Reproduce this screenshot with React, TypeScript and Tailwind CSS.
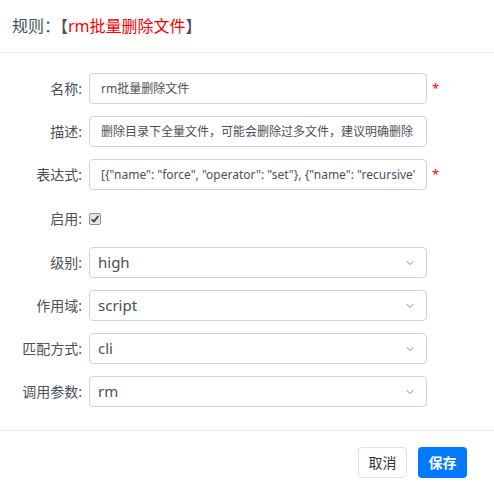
import React from 'react';
import { ChevronDown } from 'lucide-react';

const FONT = { fontFamily: '"Noto Sans", "Noto Sans CJK SC", sans-serif' };

function Label({ text }: { text: string }) {
  return (
    <div className="w-[83px] shrink-0 text-right text-[14px] text-[#495057] pr-[1px]">
      {text}
    </div>
  );
}

function TextRow({ label, value, required }: { label: string; value: string; required?: boolean }) {
  return (
    <div className="flex items-center h-[31px] mb-3">
      <Label text={label} />
      <div className="ml-[6px] w-[338px] h-[31px] border border-[#ced4da] rounded-[4px] px-[11px] flex items-center">
        <div className="flex-1 overflow-hidden whitespace-nowrap text-[12px] text-[#495057]">{value}</div>
      </div>
      {required && <span className="ml-[5px] text-[13px] text-[#ff0000] leading-none">*</span>}
    </div>
  );
}

function SelectRow({ label, value }: { label: string; value: string }) {
  return (
    <div className="flex items-center h-[31px] mb-3">
      <Label text={label} />
      <div className="ml-[6px] w-[338px] h-[31px] border border-[#ced4da] rounded-[4px] pl-[8px] pr-[10px] flex items-center justify-between">
        <span className="text-[15px] text-[#495057]">{value}</span>
        <ChevronDown className="w-[12px] h-[12px] text-[#7d858c]" strokeWidth={2} />
      </div>
    </div>
  );
}

export default function App() {
  return (
    <div className="w-[494px] h-[494px] bg-white flex flex-col" style={FONT}>
      {/* header */}
      <div className="h-[53px] border-b border-[#e9ecef] px-3 flex items-center">
        <h5 className="text-[16px] text-[#495057]">
          规则：【<span className="text-[#ff0000]">rm批量删除文件</span>】
        </h5>
      </div>

      {/* body */}
      <div className="pt-5 flex-1">
        <TextRow label="名称:" value="rm批量删除文件" required />
        <TextRow label="描述:" value="删除目录下全量文件，可能会删除过多文件，建议明确删除" />
        <TextRow
          label="表达式:"
          value={'[{"name": "force", "operator": "set"}, {"name": "recursive", "operator": "set"}]'}
          required
        />
        <div className="flex items-center h-[33px] mb-3">
          <Label text="启用:" />
          <div className="ml-[6px] w-[12px] h-[12px] border border-[#8f8f8f] bg-[#e6e6e6] rounded-[2px] flex items-center justify-center">
            <svg viewBox="0 0 12 12" className="w-[10px] h-[10px]">
              <path d="M2 6.5 L4.8 9 L10 2.5" fill="none" stroke="#333" strokeWidth="2" />
            </svg>
          </div>
        </div>
        <SelectRow label="级别:" value="high" />
        <SelectRow label="作用域:" value="script" />
        <SelectRow label="匹配方式:" value="cli" />
        <SelectRow label="调用参数:" value="rm" />
      </div>

      {/* footer */}
      <div className="h-[64px] border-t border-[#e9ecef] flex items-center justify-end gap-[11px] pr-[27px]">
        <button className="w-[49px] h-[31px] border border-[#dee2e6] rounded-[4px] text-[14px] text-[#333]">
          取消
        </button>
        <button className="w-[49px] h-[31px] rounded-[4px] bg-[#007bff] text-[14px] font-semibold text-white">
          保存
        </button>
      </div>
    </div>
  );
}
